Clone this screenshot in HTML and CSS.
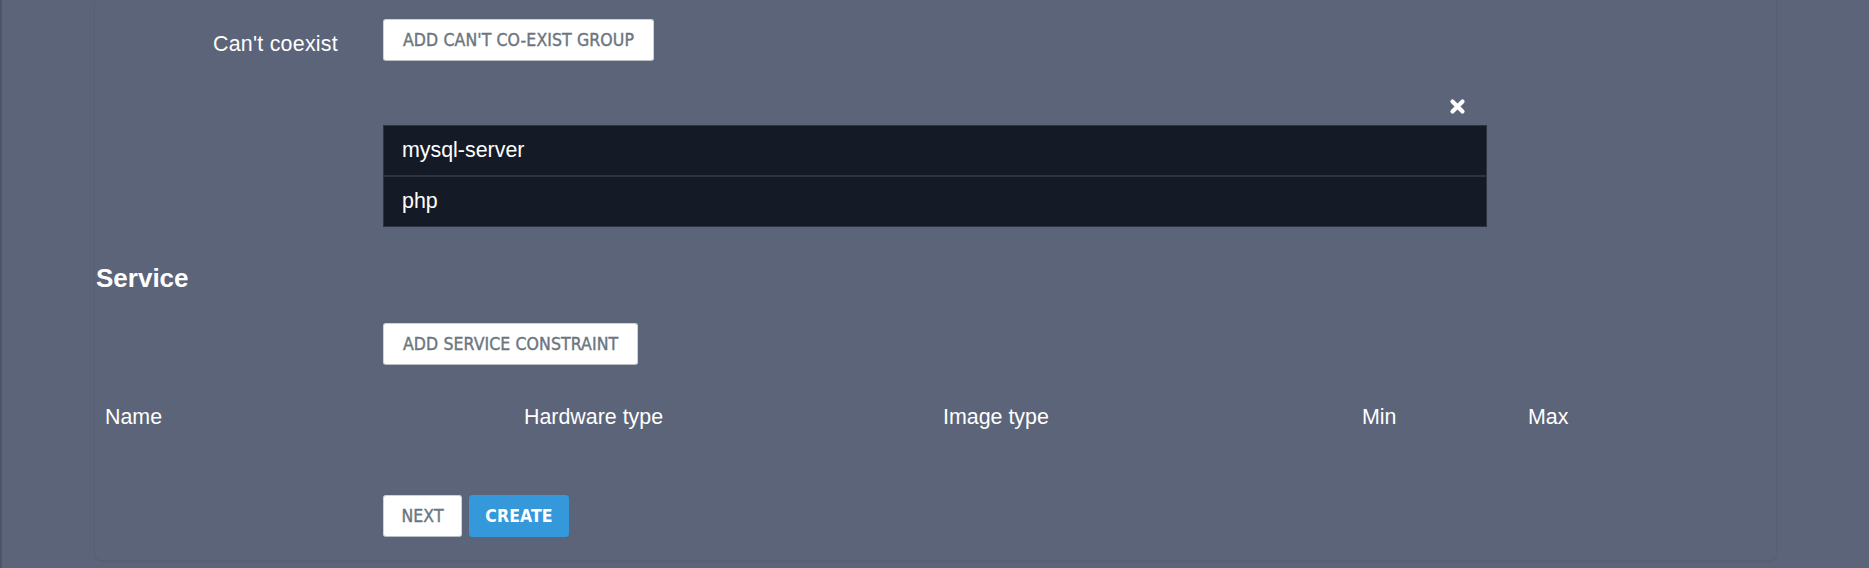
FILE: index.html
```html
<!DOCTYPE html>
<html lang="en">
<head>
<meta charset="utf-8">
<title>Constraints</title>
<link rel="stylesheet" href="styles.css">
</head>
<body>
<div class="panel">
  <div class="form-row">
    <label class="form-label">Can't coexist</label>
    <div class="form-control-col">
      <button class="btn">ADD CAN'T CO-EXIST GROUP</button>
      <div class="coexist-group">
        <div class="close-row">
          <svg class="close-icon" width="17" height="17" viewBox="0 0 17 17" aria-hidden="true">
            <path d="M3.5 3.5 L13.5 13.5 M13.5 3.5 L3.5 13.5" stroke="#ffffff" stroke-width="4.2" stroke-linecap="round" fill="none"/>
          </svg>
        </div>
        <ul class="list">
          <li class="list-item">mysql-server</li>
          <li class="list-item">php</li>
        </ul>
      </div>
    </div>
  </div>

  <h3 class="section-title">Service</h3>
  <div class="indent">
    <button class="btn">ADD SERVICE CONSTRAINT</button>
  </div>

  <div class="table-head">
    <div class="th">Name</div>
    <div class="th">Hardware type</div>
    <div class="th">Image type</div>
    <div class="th">Min</div>
    <div class="th">Max</div>
  </div>

  <div class="indent actions">
    <button class="btn btn-next">NEXT</button>
    <button class="btn btn-primary">CREATE</button>
  </div>
</div>
</body>
</html>
```

FILE: styles.css
```css
* { box-sizing: border-box; }

html, body {
  margin: 0;
  padding: 0;
  height: 100%;
}

body {
  background: #5c6479;
  color: #ffffff;
  font-family: "Liberation Sans", Arial, sans-serif;
  font-size: 21.4px;
  border-left: 2px solid #4e5566;
  overflow: hidden;
}

.panel {
  margin-left: 92px;
  width: 1683px;
  border: 1px solid rgba(0, 0, 0, 0.045);
  border-top: none;
  border-radius: 0 0 8px 8px;
  padding-bottom: 23px;
  box-shadow: 0 1px 1px rgba(0, 0, 0, 0.04);
}

.form-row {
  display: flex;
  padding-top: 19px;
}

.form-label {
  width: 243px;
  text-align: right;
  padding-top: 10px;
  line-height: 30px;
  letter-spacing: 0.25px;
  flex: none;
}

.form-control-col {
  margin-left: 45px;
}

.btn {
  display: inline-flex;
  align-items: center;
  justify-content: center;
  height: 42px;
  padding: 0 19px;
  background: #ffffff;
  border: 1px solid #cfd3d8;
  border-bottom-color: #b9bec5;
  border-radius: 3px;
  color: #6b7681;
  font-family: "DejaVu Sans Condensed", "Liberation Sans", sans-serif;
  font-size: 17.5px;
  letter-spacing: 0.1px;
  -webkit-text-stroke: 0.4px currentColor;
  cursor: pointer;
}

.coexist-group {
  margin-top: 33px;
  width: 1104px;
}

.close-row {
  display: flex;
  justify-content: flex-end;
  align-items: flex-start;
  height: 31px;
  padding-top: 4px;
  padding-right: 21px;
}

.close-icon {
  display: block;
}

.list {
  list-style: none;
  margin: 0;
  padding: 0;
}

.list-item {
  height: 51px;
  display: flex;
  align-items: center;
  padding-left: 18px;
  background: #151b26;
  border: 1px solid #2d3341;
}

.section-title {
  margin: 37px 0 0 1px;
  font-size: 26px;
  line-height: 29px;
  font-weight: bold;
}

.indent {
  margin-left: 288px;
}

.section-title + .indent {
  margin-top: 30px;
}

.table-head {
  display: grid;
  grid-template-columns: 419px 419px 419px 166px 1fr;
  padding-left: 10px;
  margin-top: 37px;
  line-height: 30px;
}

.actions {
  margin-top: 63px;
  display: flex;
  gap: 7px;
}

.btn-next {
  width: 79px;
  padding: 0;
}

.btn-primary {
  width: 100px;
  padding: 0;
  background: #3498db;
  border-color: #3498db;
  color: #ffffff;
  font-weight: bold;
  -webkit-text-stroke: 0;
}
```
